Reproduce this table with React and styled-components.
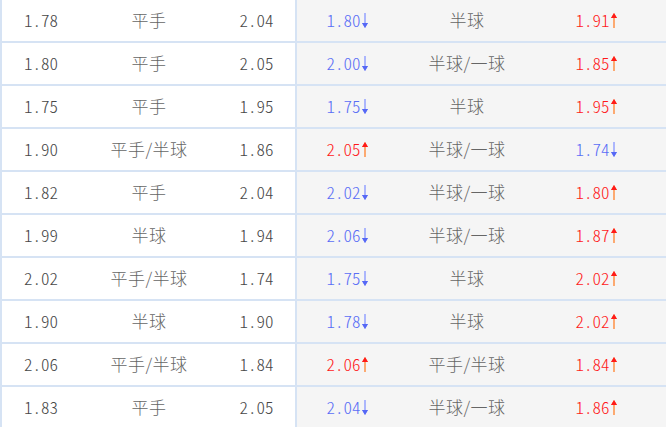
import styled, { createGlobalStyle } from "styled-components";

const GlobalStyle = createGlobalStyle`
  html, body {
    margin: 0;
    padding: 0;
    background: #ffffff;
  }
  body {
    width: 666px;
    height: 427px;
    overflow: hidden;
  }
`;

const rows = [
  ["1.78", "平手", "2.04", ["1.80", "down"], "半球", ["1.91", "up"]],
  ["1.80", "平手", "2.05", ["2.00", "down"], "半球/一球", ["1.85", "up"]],
  ["1.75", "平手", "1.95", ["1.75", "down"], "半球", ["1.95", "up"]],
  ["1.90", "平手/半球", "1.86", ["2.05", "up"], "半球/一球", ["1.74", "down"]],
  ["1.82", "平手", "2.04", ["2.02", "down"], "半球/一球", ["1.80", "up"]],
  ["1.99", "半球", "1.94", ["2.06", "down"], "半球/一球", ["1.87", "up"]],
  ["2.02", "平手/半球", "1.74", ["1.75", "down"], "半球", ["2.02", "up"]],
  ["1.90", "半球", "1.90", ["1.78", "down"], "半球", ["2.02", "up"]],
  ["2.06", "平手/半球", "1.84", ["2.06", "up"], "平手/半球", ["1.84", "up"]],
  ["1.83", "平手", "2.05", ["2.04", "down"], "半球/一球", ["1.86", "up"]],
];

const UpArrow = () => (
  <svg width="6" height="15" viewBox="0 0 6 15">
    <path d="M3 0 L6 5 L3.7 5 L3.7 15 L2.3 15 L2.3 5 L0 5 Z" fill="#ff8a3a" />
    <path d="M3 0 L6 5 L0 5 Z" fill="#ff1a1a" />
  </svg>
);

const DownArrow = () => (
  <svg width="6" height="15" viewBox="0 0 6 15">
    <path d="M2.3 0 L3.7 0 L3.7 10 L6 10 L3 15 L0 10 L2.3 10 Z" fill="#8e9cff" />
    <path d="M0 10 L6 10 L3 15 Z" fill="#5668f5" />
  </svg>
);

const Odds = ({ value, dir }) => (
  <Change $dir={dir}>
    {value}
    <ArrowBox>{dir === "up" ? <UpArrow /> : <DownArrow />}</ArrowBox>
  </Change>
);

export default function App() {
  return (
    <>
      <GlobalStyle />
      <Table>
        {rows.map((r, i) => (
          <Row key={i}>
            <Num>{r[0]}</Num>
            <Handicap>{r[1]}</Handicap>
            <Num $divider>{r[2]}</Num>
            <LiveCell>
              <Odds value={r[3][0]} dir={r[3][1]} />
            </LiveCell>
            <LiveCell>
              <Handicap>{r[4]}</Handicap>
            </LiveCell>
            <LiveCell>
              <Odds value={r[5][0]} dir={r[5][1]} />
            </LiveCell>
            <LiveCell />
          </Row>
        ))}
      </Table>
    </>
  );
}

const Table = styled.div`
  display: flex;
  flex-direction: column;
  width: 666px;
  height: 427px;
  overflow: hidden;
  border-left: 2px solid #d6e3f4;
  box-sizing: border-box;
`;

const Row = styled.div`
  display: grid;
  grid-template-columns: 78px 138px 79px 100px 140px 118px 1fr;
  height: 43px;
  flex-shrink: 0;
  border-bottom: 2px solid #d6e3f4;
  box-sizing: border-box;
`;

const Cell = styled.div`
  display: flex;
  align-items: center;
  justify-content: center;
  height: 41px;
  padding-bottom: 3px;
  box-sizing: border-box;
`;

const digits = `
  font-family: "Noto Sans CJK SC", "Liberation Mono", monospace;
  font-size: 17px;
  font-weight: 300;
  font-feature-settings: "hwid" 1;
`;

const Num = styled(Cell)`
  ${digits}
  color: #474747;
  border-right: ${(p) => (p.$divider ? "2px solid #d6e3f4" : "none")};
`;

const Handicap = styled(Cell)`
  font-family: "Noto Sans CJK SC", "Liberation Mono", sans-serif;
  font-size: 17px;
  font-weight: 300;
  color: #666666;
  letter-spacing: 0.5px;
`;

const LiveCell = styled(Cell)`
  background: #f5f5f5;
  padding-bottom: 0;
  > * {
    padding-bottom: 3px;
  }
`;

const Change = styled.span`
  display: inline-flex;
  align-items: center;
  ${digits}
  color: ${(p) => (p.$dir === "up" ? "#ff1a1a" : "#5a6ef5")};
`;

const ArrowBox = styled.span`
  display: inline-flex;
  margin-left: 1px;
  margin-top: 2px;
`;
